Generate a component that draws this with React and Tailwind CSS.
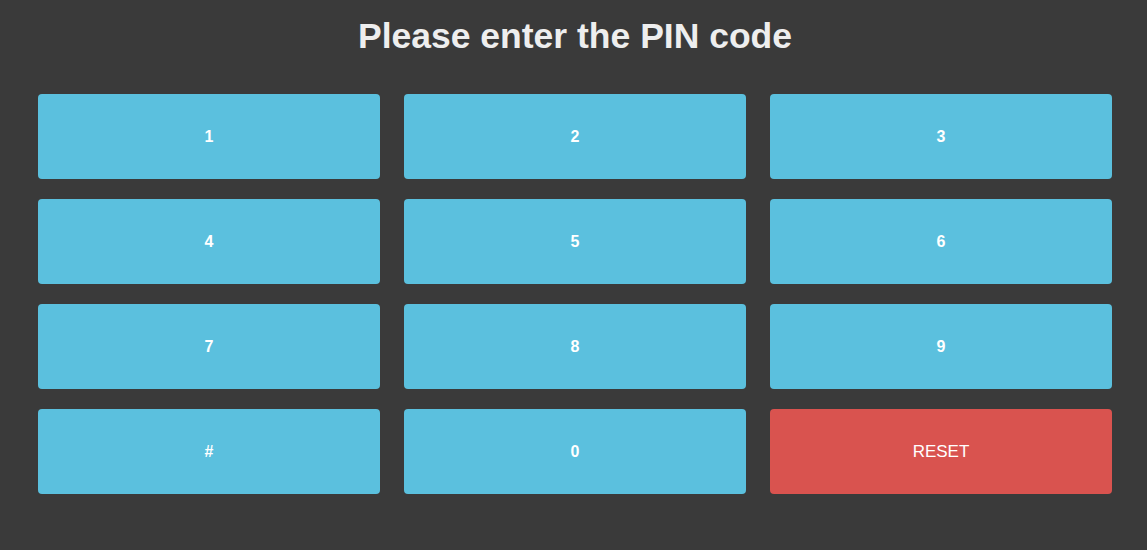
export default function App() {
  const keys = ["1", "2", "3", "4", "5", "6", "7", "8", "9", "#", "0"];
  return (
    <div className="w-[1147px] h-[550px] bg-[#3a3a3a] pl-[38px] pr-[35px] pt-[16px]" style={{ fontFamily: '"Liberation Sans", Arial, sans-serif' }}>
      <h1 className="text-center text-[#eeeeee] text-[35.5px] leading-[40px] h-[40px] font-bold">
        Please enter the PIN code
      </h1>
      <div className="grid grid-cols-[repeat(3,342px)] gap-x-6 gap-y-5 mt-[38px]">
        {keys.map((k) => (
          <button key={k} className="h-[85px] rounded-[4px] bg-[#5bc0de] text-white text-[16px] font-bold flex items-center justify-center pt-[1px]">
            {k}
          </button>
        ))}
        <button className="h-[85px] rounded-[4px] bg-[#d9534f] text-white text-[17px] flex items-center justify-center pt-[1px]">
          RESET
        </button>
      </div>
    </div>
  );
}
